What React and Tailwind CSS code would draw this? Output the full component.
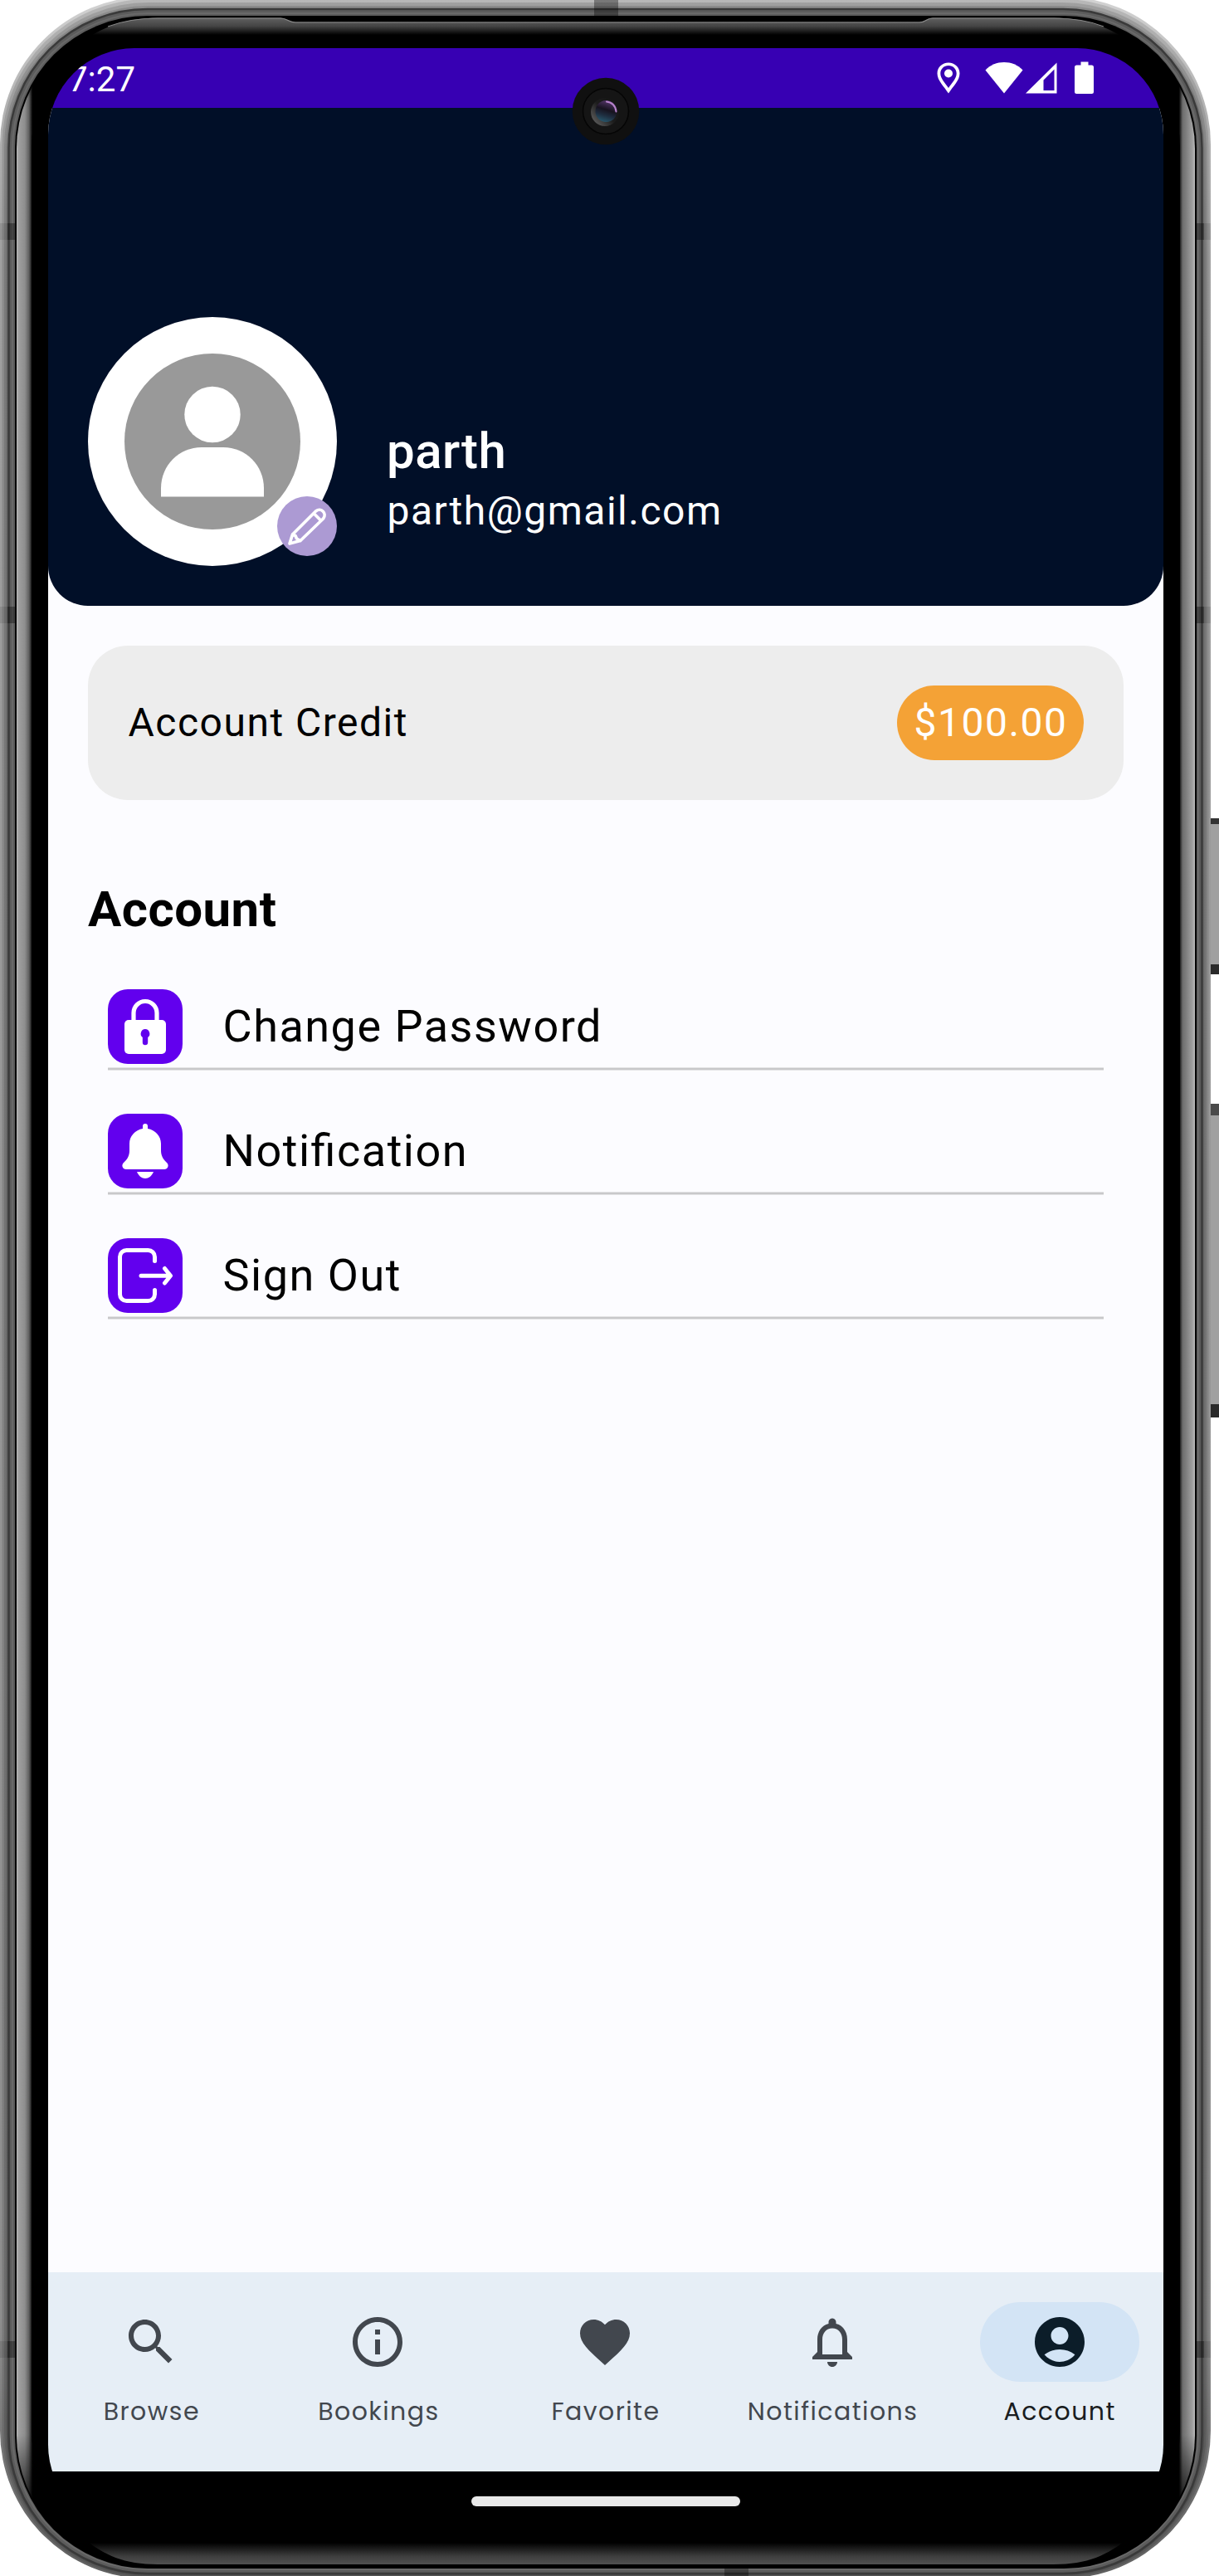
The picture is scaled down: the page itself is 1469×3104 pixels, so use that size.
import React from "react";

function Frame() {
  return (
    <svg className="absolute inset-0" width="1469" height="3104" viewBox="0 0 1469 3104" fill="none">
      <defs>
        <linearGradient id="metal" x1="0" y1="0" x2="0" y2="3104" gradientUnits="userSpaceOnUse">
          <stop offset="0" stopColor="#d2d2d2" />
          <stop offset="0.04" stopColor="#b4b4b4" />
          <stop offset="0.1" stopColor="#a0a0a0" />
          <stop offset="0.9" stopColor="#8e8e8e" />
          <stop offset="1" stopColor="#606060" />
        </linearGradient>
        <linearGradient id="side" x1="20" y1="0" x2="1440" y2="0" gradientUnits="userSpaceOnUse">
          <stop offset="0" stopColor="#bcbcbc" />
          <stop offset="0.0015" stopColor="#a0a0a0" />
          <stop offset="0.007" stopColor="#8e8e8e" />
          <stop offset="0.0105" stopColor="#606060" />
          <stop offset="0.0135" stopColor="#000" />
          <stop offset="0.9865" stopColor="#000" />
          <stop offset="0.9895" stopColor="#6c6c6c" />
          <stop offset="0.998" stopColor="#a0a0a0" />
          <stop offset="1" stopColor="#bcbcbc" />
        </linearGradient>
        <linearGradient id="topGlow" x1="0" y1="21" x2="0" y2="42" gradientUnits="userSpaceOnUse">
          <stop offset="0" stopColor="#626262" />
          <stop offset="0.5" stopColor="#444" />
          <stop offset="1" stopColor="#000" />
        </linearGradient>
        <linearGradient id="bottomGlow" x1="0" y1="3064" x2="0" y2="3091" gradientUnits="userSpaceOnUse">
          <stop offset="0" stopColor="#000" />
          <stop offset="0.6" stopColor="#3e3e3e" />
          <stop offset="1" stopColor="#525252" />
        </linearGradient>
        <linearGradient id="fade" x1="0" y1="0" x2="0" y2="3104" gradientUnits="userSpaceOnUse">
          <stop offset="0.018" stopColor="#fff" stopOpacity="0" />
          <stop offset="0.038" stopColor="#fff" />
          <stop offset="0.945" stopColor="#fff" />
          <stop offset="0.98" stopColor="#fff" stopOpacity="0" />
        </linearGradient>
        <mask id="sideMask" maskUnits="userSpaceOnUse" x="0" y="0" width="1469" height="3104">
          <rect width="1469" height="3104" fill="url(#fade)" />
        </mask>
      </defs>
      <g>
        <rect x="1455" y="986" width="20" height="188" fill="#a0a0a0" />
        <rect x="1455" y="986" width="20" height="7" fill="#333" />
        <rect x="1455" y="1162" width="20" height="12" fill="#2a2a2a" />
        <rect x="1455" y="1330" width="20" height="378" fill="#a0a0a0" />
        <rect x="1455" y="1330" width="20" height="14" fill="#4a4a4a" />
        <rect x="1455" y="1692" width="20" height="16" fill="#2a2a2a" />
      </g>
      <rect x="0" y="-4" width="1459" height="3111" rx="178" fill="url(#metal)" />
      <g fill="#000" fillOpacity="0.12">
        <rect x="2.500" y="-1" width="1454" height="3106" rx="176" />
        <rect x="5" y="3" width="1449" height="3100" rx="174" />
        <rect x="7.500" y="7" width="1444" height="3095" rx="171" />
      </g>
      <rect x="10.5" y="11" width="1438" height="3090" rx="167" fill="#5c5c5c" stroke="#3a3a3a" strokeWidth="2.500" />
      <rect x="15" y="16" width="1429" height="3080" rx="163" stroke="#696969" strokeWidth="2" />
      <rect x="18" y="19" width="1424" height="3076" rx="160" fill="#000" />
      <g mask="url(#sideMask)">
        <rect x="20" y="21" width="1420" height="3072" rx="158" fill="url(#side)" />
        <rect x="38" y="42" width="1384" height="3022" rx="135" fill="#000" />
      </g>
      <path d="M100 50C125 31 155 21.500 190 21.500H338C346 21.500 348 26.500 356 26.500H1108C1116 26.500 1116 21.500 1124 21.500H1270C1305 21.500 1335 31 1360 50Z" fill="url(#topGlow)" />
      <path d="M130 32C150 24.500 170 22 190 22H338C346 22 348 27 356 27H1108C1116 27 1116 22 1124 22H1270C1295 22 1315 26 1330 32" stroke="#8a8a8a" strokeWidth="1.2" />
      <path d="M100 3058C125 3079 150 3090 190 3090H1270C1310 3090 1335 3079 1360 3058Z" fill="url(#bottomGlow)" />
      <g fill="#000" fillOpacity="0.35">
        <rect x="716" y="0" width="29" height="19" />
        <rect x="873" y="3094" width="29" height="10" />
        <rect x="9" y="269" width="9" height="20" />
        <rect x="1442" y="269" width="9" height="20" />
        <rect x="9" y="731" width="9" height="20" />
        <rect x="1442" y="731" width="9" height="20" />
        <rect x="9" y="2821" width="9" height="20" />
        <rect x="1442" y="2821" width="9" height="20" />
      </g>
      <g fill="#000" fillOpacity="0.1">
        <rect x="0" y="269" width="9" height="20" />
        <rect x="1451" y="269" width="8" height="20" />
        <rect x="0" y="731" width="9" height="20" />
        <rect x="1451" y="731" width="8" height="20" />
        <rect x="0" y="2821" width="9" height="20" />
        <rect x="1451" y="2821" width="8" height="20" />
      </g>
    </svg>
  );
}

function Camera() {
  return (
    <svg className="absolute left-[631px] top-[35px]" width="82" height="82" viewBox="0 0 82 82" fill="none">
      <defs>
        <linearGradient id="lens" x1="0.7" y1="0" x2="0.4" y2="1">
          <stop offset="0" stopColor="#5a3a70" />
          <stop offset="0.45" stopColor="#17131f" />
          <stop offset="0.7" stopColor="#1e2c3e" />
          <stop offset="1" stopColor="#28566a" />
        </linearGradient>
        <linearGradient id="ring" x1="0" y1="0.9" x2="0.8" y2="0.2">
          <stop offset="0" stopColor="#666" />
          <stop offset="0.6" stopColor="#1c1c1c" />
          <stop offset="1" stopColor="#161616" />
        </linearGradient>
      </defs>
      <circle cx="41" cy="41" r="40.300" fill="#101010" />
      <circle cx="41" cy="41" r="27.500" fill="#151515" stroke="#050505" strokeWidth="1.500" />
      <circle cx="40" cy="42" r="17" fill="url(#ring)" />
      <circle cx="41.500" cy="41" r="13" fill="url(#lens)" />
      <path d="M42 29.500c6 .5 11 5 11.500 12" stroke="#b883cc" strokeWidth="2" strokeLinecap="round" />
    </svg>
  );
}

function StatusBar() {
  return (
    <div className="flex h-[72px] items-center justify-between bg-[#3700b3] pl-[24px] pr-[83px]">
      <span className="relative top-[1.500px] text-[42px] leading-[50px] text-white">7:27</span>
      <svg width="190" height="40" viewBox="0 0 190 40" className="relative" fill="#fff">
        <path fillRule="evenodd" d="M14 1.500C6.500 1.500 .5 7 .5 14.500c0 8.500 8 15.500 13.500 24 5.500-8.500 13.500-15.500 13.500-24C27.500 7 21.500 1.500 14 1.500zM14 5c5.500 0 9.700 4.200 9.700 9.500 0 6-5 10.500-9.700 17.500C9.300 25 4.300 20.500 4.300 14.500 4.300 9.200 8.500 5 14 5z" />
        <circle cx="14" cy="14.500" r="5" />
        <path d="M81 38.500 58.500 10.500C64.500 4 72.500 1 81 1S97.500 4 103.500 10.500z" />
        <path fillRule="evenodd" d="M144.500 1.500v37h-37.500zM141.500 9.500 128.500 22.500v12.500h13z" />
        <path d="M173.500 .5h9v4h4a2.500 2.500 0 0 1 2.500 2.500v29.500a2.500 2.500 0 0 1-2.500 2.500h-18a2.500 2.500 0 0 1-2.500-2.500V7a2.500 2.500 0 0 1 2.500-2.500h5z" />
      </svg>
    </div>
  );
}

function Avatar() {
  return (
    <div className="relative size-[300px] shrink-0 rounded-full bg-white">
      <svg width="300" height="300" viewBox="0 0 300 300" fill="#fff">
        <circle cx="150" cy="150" r="106" fill="#999" />
        <circle cx="150" cy="117.500" r="33.700" />
        <path d="M88 216.500v-10c0-28 22-49.500 49-49.500h26c27 0 49 21.500 49 49.500v10z" />
      </svg>
      <div className="absolute bottom-[12px] right-0 flex size-[72px] items-center justify-center rounded-full bg-[#ac9ad3]">
        <svg width="48" height="48" viewBox="0 0 48 48" fill="none" stroke="#fff" strokeWidth="3.700" strokeLinejoin="round" strokeLinecap="round">
          <path d="M3 45l3.500-11L34.500 6c6.500-5 14 2.500 9 9L16 41.500zM6.500 34l3.500 1.500 1.500 3.500 4.500 2.500M32 8.500l8.500 8.500" />
        </svg>
      </div>
    </div>
  );
}

function LockIcon() {
  return (
    <svg width="90" height="90" viewBox="0 0 90 90" fill="none">
      <path d="M31 40V28.500a14 14 0 0 1 28 0V40" stroke="#fff" strokeWidth="5.200" />
      <rect x="20" y="37" width="50" height="41" rx="5" fill="#fff" />
      <path d="M45 48a5.600 5.600 0 0 1 3.200 10V64a3.200 3.200 0 0 1-6.400 0v-6A5.600 5.600 0 0 1 45 48z" fill="#6200ee" />
    </svg>
  );
}

function BellIcon() {
  return (
    <svg width="90" height="90" viewBox="0 0 90 90" fill="#fff">
      <path d="M45 12a3 3 0 0 1 3 3v3c9 1.500 16 9 16 18v8c0 6 2 10 6 14 5 4 2 9-2 9H22c-4 0-7-5-2-9 4-4 6-8 6-14v-8c0-9 7-16.500 16-18v-3a3 3 0 0 1 3-3z" />
      <path d="M35 70h20c-2 5-6 8-10 8s-8-3-10-8z" />
    </svg>
  );
}

function SignOutIcon() {
  return (
    <svg width="90" height="90" viewBox="0 0 90 90" fill="none" stroke="#fff" strokeWidth="5" strokeLinecap="round" strokeLinejoin="round">
      <path d="M56.500 27.500V22.500a8 8 0 0 0-8-8h-26a8 8 0 0 0-8 8v45a8 8 0 0 0 8 8h26a8 8 0 0 0 8-8V62.500M40 45.300h35M68.500 36.500l7 8.800-7 8.700" />
    </svg>
  );
}

function Row({ icon, label }) {
  return (
    <div className="flex h-[98px] flex-col justify-between">
      <div className="flex items-center gap-[48.500px]">
        <div className="size-[90px] rounded-[24px] bg-[#6200ee]">{icon}</div>
        <span className="text-[54px] leading-[72px] tracking-[1.5px] [font-feature-settings:'liga']">{label}</span>
      </div>
      <div className="h-[4px] border-y border-[#e3e3e5] bg-[#c8c8ca]" />
    </div>
  );
}

const tabs = [
  {
    label: "Browse",
    path: "M15.500 14h-.79l-.28-.27C15.410 12.590 16 11.110 16 9.500 16 5.910 13.090 3 9.500 3S3 5.910 3 9.500 5.910 16 9.500 16c1.610 0 3.090-.59 4.230-1.570l.27.28v.79l5 4.990L20.490 19l-4.990-5zm-6 0C7.010 14 5 11.990 5 9.500S7.010 5 9.500 5 14 7.010 14 9.500 11.990 14 9.500 14z",
  },
  {
    label: "Bookings",
    path: "M11 7h2v2h-2zm0 4h2v6h-2zm1-9C6.480 2 2 6.480 2 12s4.480 10 10 10 10-4.480 10-10S17.520 2 12 2zm0 18c-4.410 0-8-3.590-8-8s3.590-8 8-8 8 3.590 8 8-3.590 8-8 8z",
  },
  {
    label: "Favorite",
    path: "M12 21.350l-1.450-1.320C5.400 15.360 2 12.280 2 8.500 2 5.420 4.420 3 7.500 3c1.740 0 3.410.81 4.500 2.090C13.090 3.810 14.760 3 16.500 3 19.580 3 22 5.420 22 8.500c0 3.780-3.400 6.860-8.550 11.540L12 21.350z",
  },
  {
    label: "Notifications",
    path: "M12 22c1.100 0 2-.9 2-2h-4c0 1.100.9 2 2 2zm6-6v-5c0-3.070-1.630-5.640-4.500-6.320V4c0-.83-.67-1.500-1.500-1.500s-1.500.67-1.500 1.500v.68C7.640 5.360 6 7.920 6 11v5l-2 2v1h16v-1l-2-2zm-2 1H8v-6c0-2.480 1.510-4.500 4-4.500s4 2.020 4 4.500v6z",
  },
  {
    label: "Account",
    active: true,
    path: "M12 2C6.480 2 2 6.480 2 12s4.480 10 10 10 10-4.480 10-10S17.520 2 12 2zm0 4c1.930 0 3.500 1.570 3.500 3.500S13.930 13 12 13s-3.500-1.570-3.500-3.500S10.070 6 12 6zm0 14c-2.030 0-4.430-.82-6.140-2.880a9.947 9.947 0 0 1 12.280 0C16.430 19.180 14.030 20 12 20z",
  },
];

function BottomNav() {
  return (
    <nav className="flex h-[240px] shrink-0 gap-[24px] bg-[#e6eef6] pt-[36px]">
      {tabs.map((t) => (
        <div key={t.label} className="flex w-0 grow flex-col items-center">
          <div className={`flex h-[96px] w-[192px] items-center justify-center rounded-full ${t.active ? "bg-[#d3e4f5]" : "pr-[2px]"}`}>
            <svg width="72" height="72" viewBox="0 0 24 24" fill={t.active ? "#0c1d29" : "#42474e"}>
              <path d={t.path} />
            </svg>
          </div>
          <span
            className={`mt-[12px] whitespace-nowrap font-['Poppins','Lato',sans-serif] text-[30px] leading-[48px] tracking-[1.450px] ${t.active ? "text-[#191c20]" : "text-[#42474e]"}`}
          >
            {t.label}
          </span>
        </div>
      ))}
    </nav>
  );
}

export default function App() {
  return (
    <div className="relative h-[3104px] w-[1469px] overflow-hidden bg-white pl-[58px] pt-[58px] font-['Roboto',sans-serif]">
      <Frame />
      <div className="relative flex h-[2992px] w-[1344px] flex-col overflow-hidden rounded-[104px] bg-black text-black">
        <StatusBar />
        <main className="flex grow flex-col bg-[#fcfcff]">
          <header className="flex h-[600px] items-end gap-[60px] rounded-b-[48px] bg-[#010f28] px-[48px] pb-[48px] text-white">
            <Avatar />
            <div className="pb-[36px]">
              <div className="text-[60px] font-medium leading-[84px] tracking-[0.45px]">parth</div>
              <div className="pl-[0.500px] text-[48px] leading-[60px] tracking-[1.5px]">parth@gmail.com</div>
            </div>
          </header>
          <section className="mx-[48px] mt-[48px] flex h-[186px] items-center justify-between rounded-[48px] bg-[#ededed] pl-[48.500px] pr-[48px]">
            <span className="text-[48px] leading-[72px] tracking-[1.5px]">Account Credit</span>
            <span className="flex h-[90px] w-[225px] items-center justify-center rounded-full bg-[#f4a236] pl-px text-[48px] leading-[72px] tracking-[1.5px] text-white">
              $100.00
            </span>
          </section>
          <h2 className="ml-[48px] mt-[96px] text-[60px] font-bold leading-[72px] tracking-[0.45px]">Account</h2>
          <div className="mx-[72px] mt-[60px] flex flex-col gap-[52px]">
            <Row icon={<LockIcon />} label="Change Password" />
            <Row icon={<BellIcon />} label="Notification" />
            <Row icon={<SignOutIcon />} label="Sign Out" />
          </div>
        </main>
        <BottomNav />
        <div className="flex h-[72px] shrink-0 items-center justify-center">
          <div className="h-[12px] w-[324px] rounded-full bg-[#e9e9e9]" />
        </div>
        <Camera />
      </div>
    </div>
  );
}
